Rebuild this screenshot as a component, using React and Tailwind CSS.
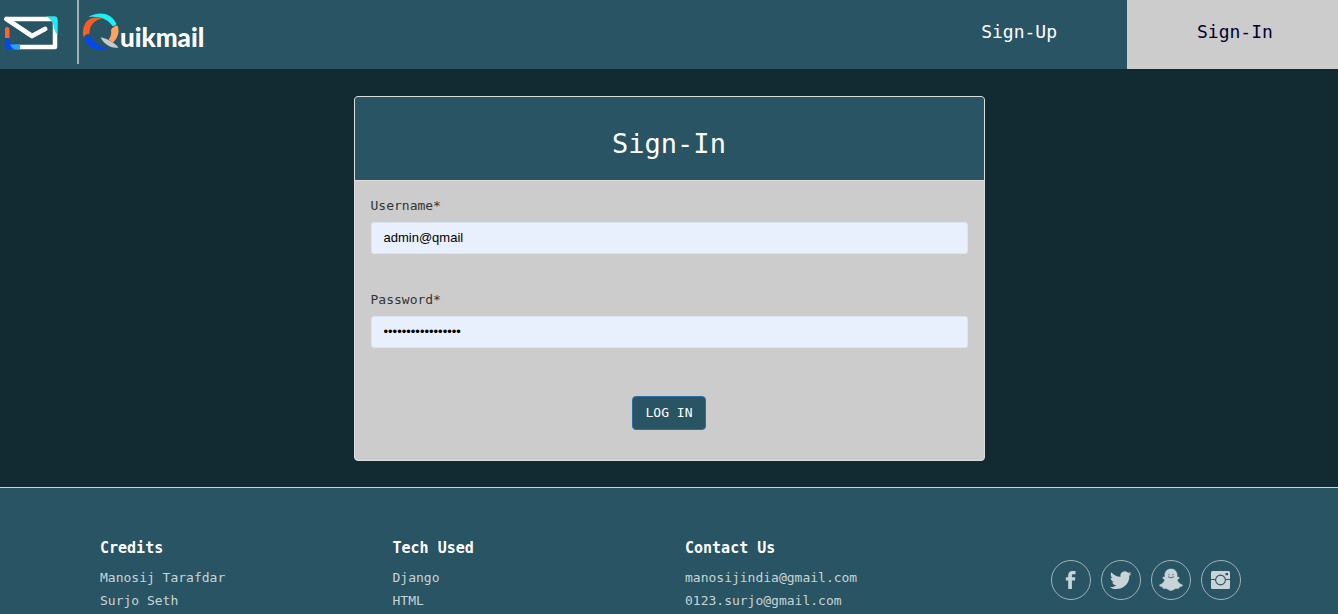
import React from "react";

const socials = [
  { name: "Facebook", icon: <path d="M17.200 29V20.600H14.800V17.200H17.200V15.200C17.200 12.300 18.900 10.900 21.700 10.900H24.500V14.300H22.400C21.300 14.300 20.900 14.800 20.900 15.700V17.200H24.400L23.900 20.600H20.900V29Z" /> },
  { name: "Twitter", icon: <path transform="translate(8 9) scale(.96)" d="M23.600 4.600c-.8.400-1.700.6-2.700.8.900-.6 1.600-1.500 2-2.600-.9.500-1.900.9-2.900 1.100a4.700 4.700 0 0 0-8 4.300C8 8 4.600 6.100 2.400 3.300c-1.200 2.100-.6 4.800 1.400 6.200-.7 0-1.500-.2-2.100-.6 0 2.300 1.500 4.200 3.700 4.700-.7.200-1.400.2-2.100.1.600 1.800 2.300 3.200 4.400 3.200A9.400 9.400 0 0 1 .8 18.900c7.800 4.900 20.600.2 20.400-11.900.9-.7 1.700-1.500 2.400-2.400z" /> },
  { name: "Snapchat", icon: <g><path d="M20 9c-4 0-6.100 2.700-6.100 6v2.200c-1.200-.4-2.100-.1-2.200.6-.1.800 1 1.200 2 1.700-.2 2.200-2.100 4.400-5 5.300-.9.500.2 1.700 3 2.200.3.800.2 1.500 1 1.600 1.300 0 2.300-.4 3.600.4 1.200.7 2.200 1.500 3.700 1.500s2.500-.8 3.700-1.500c1.300-.8 2.300-.4 3.600-.4.800-.1.700-.8 1-1.600 2.800-.5 3.900-1.700 3-2.200-2.900-.9-4.800-3.100-5-5.300 1-.5 2.100-.9 2-1.700-.1-.7-1-1-2.200-.6V15c0-3.300-2.100-6-6.100-6z" stroke="#c9d4d8" strokeWidth=".5" /><path d="M18 14v1.300M22 14v1.300M17 16.800q3 2 6 0" fill="none" stroke="#285463" strokeWidth=".8" /></g> },
  { name: "Instagram", icon: <g><rect x="10" y="11" width="19" height="18" rx="1.500" /><path d="M10 19.500H14.500M24.500 19.500H29" stroke="#285463" /><circle cx="19.500" cy="20" r="4.900" fill="none" stroke="#285463" strokeWidth="1.100" /><rect x="24.500" y="13" width="2.500" height="2.200" fill="#285463" /></g> },
];

const columns = [
  { title: "Credits", items: ["Manosij Tarafdar", "Surjo Seth"] },
  { title: "Tech Used", items: ["Django", "HTML"] },
  { title: "Contact Us", items: ["manosijindia@gmail.com", "0123.surjo@gmail.com"] },
];

function EnvelopeLogo() {
  return (
    <svg viewBox="0 0 56 36" className="h-9 w-14" aria-hidden="true">
      <path d="M3 3H51V31H8" fill="none" stroke="#fff" strokeWidth="4.500" strokeLinejoin="round" />
      <path d="M2.500 3L28 20L41 13" fill="none" stroke="#fff" strokeWidth="4.800" strokeLinecap="round" strokeLinejoin="round" />
      <path d="M42 .5H51Q53.500 .5 53.500 4V19Q50 15 49 7Q46 2 42 .5Z" fill="#1cebf5" />
      <path d="M1 12Q5 9 5.500 14V22H1Z" fill="#ff632e" />
      <path d="M1 22Q5 21 6 28L16 29V33.500H4Q1 33.500 1 30Z" fill="#0546ed" />
      <path d="M6 28.500H16V33.500H12Q8 33 6 28.500Z" fill="#20a7f8" />
    </svg>
  );
}

function Brand() {
  return (
    <a href="#" aria-label="Quikmail" className="flex items-center">
      <svg viewBox="0 0 38 38" className="h-[38px] w-[38px]" aria-hidden="true">
        <path d="M6.500 4C15-1.500 29-1.500 34.500 11Q34 13.500 30.500 13C27 7 18 2.500 6.500 4Z" fill="#1ceff4" />
        <path d="M20 5.500C12 3 6 6 3 11Q-.5 18 1.700 24Q4.500 20 7.500 21C7 13 12 7 20 5.500Z" fill="#ff5b25" />
        <path d="M2.300 25.500Q4 23 8.500 23.500C11 29 17 34 26 35.500C15 39 5 34 2.300 25.500Z" fill="#0647f1" />
        <path d="M29 17Q31 13 35.500 12.500C38 18 36 25 31 29.500L26.500 26.500Q30 23 29 17Z" fill="#ffa35c" />
        <path d="M18.500 24.500C24 25 32 29 36.500 34.500C29 36 22 31 18.500 24.500Z" fill="#c7c9cc" />
      </svg>
      <span className="pt-2.5 font-['Lato',sans-serif] text-[26px] leading-8 font-black text-white">uikmail</span>
    </a>
  );
}

function Field({ label, id, type, value }) {
  return (
    <div>
      <label htmlFor={id} className="block text-[13px] leading-5 text-[#333]">{label}</label>
      <input id={id} type={type} defaultValue={value} className="mt-1.5 block h-8 w-full rounded-[3px] border border-[#dce4f1] bg-[#e8f0fe] px-3 pb-0.5 font-['Liberation_Sans',sans-serif] text-[13px] text-black outline-none" />
    </div>
  );
}

export default function App() {
  return (
    <div className="flex min-h-screen flex-col bg-[#122b32] font-['DejaVu_Sans_Mono',monospace]">
      <header className="flex h-[69px] justify-between bg-[#285463]">
        <div className="flex h-16 pl-1">
          <div className="flex items-center pt-1">
            <EnvelopeLogo />
          </div>
          <span className="ml-[17px] mr-[3px] h-full border-l-2 border-[#a0b2b8]" />
          <Brand />
        </div>
        <nav className="flex text-lg">
          <a href="#signup" className="flex items-center px-[70px] pb-1.5 text-white">Sign-Up</a>
          <a href="#signin" className="flex w-[211px] items-center bg-[#ccc] pb-1.5 pl-[70px] text-[#000033]">Sign-In</a>
        </nav>
      </header>
      <main className="px-4 pt-[27px] pb-[26px]">
        <section className="mx-auto w-full max-w-[631px] overflow-hidden rounded border border-[#ddd] bg-[#ccc]">
          <h1 className="border-b border-[#ddd] bg-[#285463] pt-[27px] pb-4 text-center text-[27px] leading-10 text-white">Sign-In</h1>
          <form className="flex flex-col gap-9 px-4 pt-[15px] pb-[30px]" onSubmit={(e) => e.preventDefault()}>
            <Field label="Username*" id="username" type="text" value="admin@qmail" />
            <Field label="Password*" id="password" type="password" value="quikmailpassword1" />
            <button type="submit" className="mt-3 h-[34px] self-center rounded border border-[#2e6da4] bg-[#285463] px-[13px] text-[13px] text-white">LOG IN</button>
          </form>
        </section>
      </main>
      <footer className="flex-1 border-t border-[#ccd4d7] bg-[#285463] px-4 pt-12">
        <div className="mx-auto grid max-w-[1170px] grid-cols-4">
          {columns.map((column) => (
            <div key={column.title} className="px-4">
              <h2 className="mb-1.5 text-[15px] leading-6 font-bold text-white">{column.title}</h2>
              <ul className="text-[13px] leading-[23px] text-[#c9d4d8]">
                {column.items.map((item) => <li key={item}><a href="#">{item}</a></li>)}
              </ul>
            </div>
          ))}
          <div className="flex justify-end gap-2.5 pt-6 pr-[13px]">
            {socials.map(({ name, icon }) => (
              <a key={name} href="#" aria-label={name} className="h-10 w-10">
                <svg viewBox="0 0 40 40" className="h-10 w-10" fill="#c9d4d8" aria-hidden="true">
                  <circle cx="20" cy="20" r="19.500" fill="none" stroke="#a0b2b8" />
                  {icon}
                </svg>
              </a>
            ))}
          </div>
        </div>
      </footer>
    </div>
  );
}
